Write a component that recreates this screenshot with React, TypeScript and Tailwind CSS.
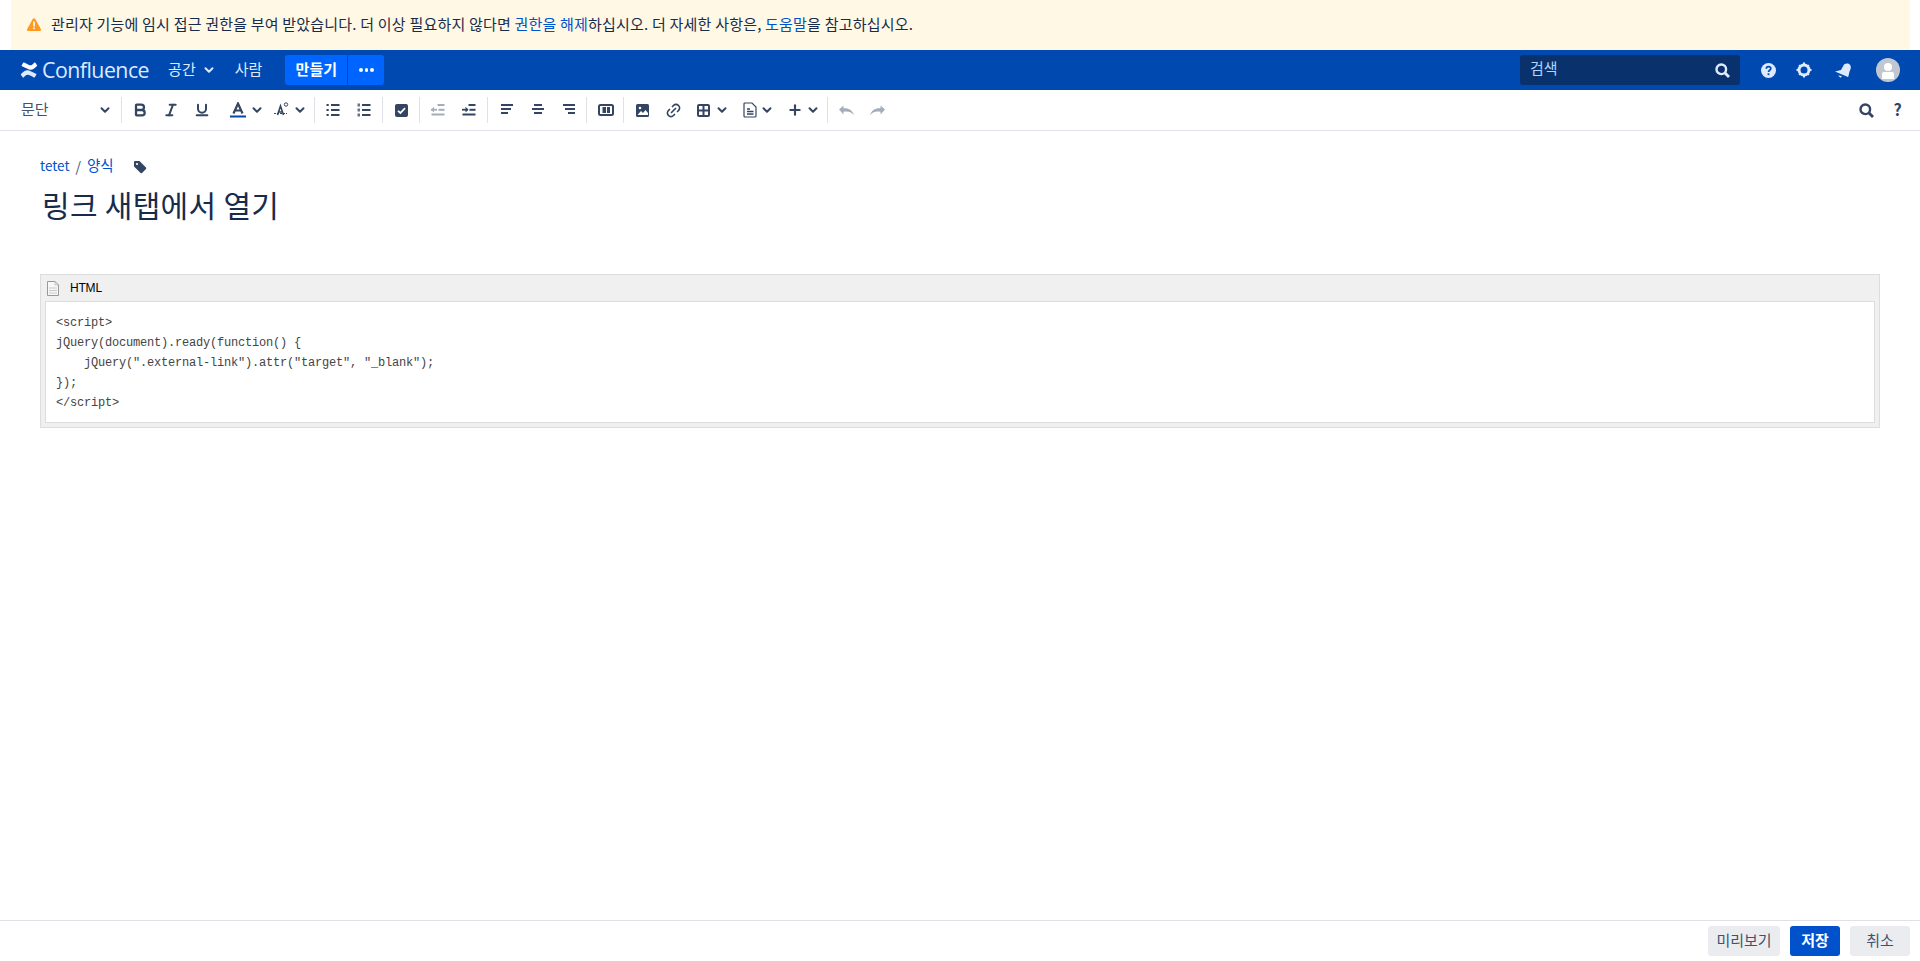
import React from "react";
import { Bold, Italic, Underline, ChevronDown, Link2, Plus } from "lucide-react";

const ink = "#344563";

function Sep() {
  return <div className="w-px h-[26px] bg-[#dfe1e6] shrink-0" />;
}

function Btn({ children, className = "w-[31px]" }: { children: React.ReactNode; className?: string }) {
  return <div className={`h-[30px] flex items-center justify-center shrink-0 ${className}`}>{children}</div>;
}

function Chev() {
  return <ChevronDown size={14} strokeWidth={3.4} color={ink} className="shrink-0" />;
}

function Mag({ color, size = 15 }: { color: string; size?: number }) {
  return (
    <svg width={size} height={size} viewBox="0 0 15 15" fill="none" stroke={color}>
      <circle cx="6.300" cy="6.300" r="4.800" strokeWidth="2.400" />
      <path d="M10 10l4 4" strokeWidth="2.800" />
    </svg>
  );
}

function Lines({ rows, color = ink }: { rows: [number, number][]; color?: string }) {
  return (
    <svg width="14" height="14" viewBox="0 0 14 14">
      {rows.map(([x, w], i) => (
        <rect key={i} x={x} y={1 + i * 4} width={w} height="2" fill={color} />
      ))}
    </svg>
  );
}

function ListIcon({ numbered }: { numbered?: boolean }) {
  return (
    <svg width="14" height="14" viewBox="0 0 14 14" fill={ink}>
      {[1, 6, 11].map((y) => (
        <g key={y}>
          <rect x="5" y={y} width="8.500" height="2" />
          {numbered ? <rect x="0.500" y={y - 0.5} width="2.500" height="3" opacity=".75" /> : <rect x="0.500" y={y} width="2.200" height="2" />}
        </g>
      ))}
    </svg>
  );
}

function IndentIcon({ color, out }: { color: string; out?: boolean }) {
  return (
    <svg width="14" height="14" viewBox="0 0 14 14" fill={color}>
      <rect x="6.500" y="1" width="7" height="2" />
      <rect x="7.500" y="5.800" width="6" height="2" />
      <rect x="0.500" y="10.500" width="13" height="2" />
      <rect x="0" y="5.800" width="6" height="1.800" />
      {out ? <path d="M0 6.700 3 3.800v5.800z" /> : <path d="M6.500 6.700 3.500 3.800v5.800z" />}
    </svg>
  );
}

function Toolbar() {
  return (
    <div className="h-[41px] flex items-center border-b border-[#e1e3e8] bg-white pl-[8px] pr-[7px] shrink-0">
      <div className="w-[113px] flex items-center justify-between pl-[13px] pr-[9px] text-[15px] text-[#42526e]">
        <span className="-mt-[2px]">문단</span>
        <Chev />
      </div>
      <Sep />
      <div className="w-[2px]" />
      <Btn><Bold size={16} strokeWidth={3.4} color={ink} /></Btn>
      <Btn><Italic size={16} strokeWidth={3} color={ink} /></Btn>
      <Btn><Underline size={16} strokeWidth={3} color={ink} /></Btn>
      <Btn className="w-[44px] ml-[8px] gap-[4px]">
        <svg width="16" height="16" viewBox="0 0 16 16">
          <path d="M3.500 11.500 8 1.500l4.500 10M5 8.500h6" fill="none" stroke={ink} strokeWidth="2.200" />
          <rect y="13.500" width="16" height="2" fill="#0747a6" />
        </svg>
        <Chev />
      </Btn>
      <Btn className="w-[42px] gap-[3px]">
        <svg width="16" height="16" viewBox="0 0 16 16" fill="none" stroke={ink}>
          <path d="M3.500 13 6.500 4l3 9M4.500 10h4" strokeWidth="1.600" />
          <path d="M0 11.500h13" strokeWidth="1.200" strokeDasharray="2 1" />
          <circle cx="12" cy="2.500" r="1.700" strokeWidth="1" />
        </svg>
        <Chev />
      </Btn>
      <div className="w-[3px]" />
      <Sep />
      <div className="w-[2px]" />
      <Btn><ListIcon /></Btn>
      <Btn><ListIcon numbered /></Btn>
      <div className="w-[3px]" />
      <Sep />
      <div className="w-[3px]" />
      <Btn>
        <svg width="13" height="13" viewBox="0 0 13 13">
          <rect width="13" height="13" rx="2" fill={ink} />
          <path d="M3 6.800 5.400 9 10 4.200" fill="none" stroke="#fff" strokeWidth="1.800" />
        </svg>
      </Btn>
      <div className="w-[2px]" />
      <Sep />
      <div className="w-[2px]" />
      <Btn><IndentIcon color="#a5adba" out /></Btn>
      <Btn><IndentIcon color={ink} /></Btn>
      <div className="w-[3px]" />
      <Sep />
      <div className="w-[3px]" />
      <Btn><Lines rows={[[1, 12], [1, 10], [1, 7]]} /></Btn>
      <Btn><Lines rows={[[3, 8], [1, 12], [3, 8]]} /></Btn>
      <Btn><Lines rows={[[1, 12], [3, 10], [6, 7]]} /></Btn>
      <div className="w-[2px]" />
      <Sep />
      <div className="w-[3px]" />
      <Btn>
        <svg width="16" height="12" viewBox="0 0 16 12">
          <rect x="1" y="1" width="14" height="10" rx="1.500" fill="none" stroke={ink} strokeWidth="2" />
          <rect x="4.500" y="3" width="3.500" height="6" fill={ink} />
          <rect x="9" y="3" width="3" height="6" fill={ink} />
        </svg>
      </Btn>
      <div className="w-[2px]" />
      <Sep />
      <div className="w-[3px]" />
      <Btn>
        <svg width="13" height="13" viewBox="0 0 13 13">
          <rect width="13" height="13" rx="1.500" fill={ink} />
          <circle cx="4" cy="4" r="1.300" fill="#fff" />
          <path d="M1.500 11 5 7l2 2 2.500-3L12 9v2z" fill="#fff" />
        </svg>
      </Btn>
      <Btn><Link2 size={17} strokeWidth={2.4} color={ink} className="-rotate-45" /></Btn>
      <Btn className="w-[46px] gap-[5px] pl-[1px]">
        <svg width="13" height="13" viewBox="0 0 13 13" fill="none" stroke={ink} strokeWidth="2">
          <rect x="1" y="1" width="11" height="11" rx="1" />
          <path d="M6.500 1v11M1 6.500h11" />
        </svg>
        <Chev />
      </Btn>
      <Btn className="w-[46px] gap-[3px] ml-[-1px] pl-[2px]">
        <svg width="14" height="16" viewBox="0 0 14 16" fill="none" stroke={ink} strokeWidth="1.200">
          <path d="M1 2a1 1 0 0 1 1-1h7l4 4v9a1 1 0 0 1-1 1H2a1 1 0 0 1-1-1z" />
          <path d="M4 7h3M4 9.500h6.500M4 12h6.500" strokeWidth="1.400" />
        </svg>
        <Chev />
      </Btn>
      <Btn className="w-[45px] gap-[3px] pl-[1px]">
        <Plus size={16} strokeWidth={3.2} color={ink} />
        <Chev />
      </Btn>
      <div className="w-[2px]" />
      <Sep />
      <div className="w-[3px]" />
      <Btn>
        <svg width="15" height="11" viewBox="0 0 15 11" fill="#a5adba">
          <path d="M0 4.500 4.500.5v2.700c5-.5 9 1.700 10.500 7.300-2-3.400-5.500-4.500-10.500-3.800v2.800z" />
        </svg>
      </Btn>
      <Btn>
        <svg width="15" height="11" viewBox="0 0 15 11" fill="#a5adba">
          <path d="M15 4.500 10.500.5v2.700C5.500 2.700 1.500 4.900 0 10.500c2-3.400 5.500-4.500 10.500-3.800v2.800z" />
        </svg>
      </Btn>
      <div className="ml-auto flex items-center">
        <Btn className="w-[31px]"><Mag color={ink} /></Btn>
        <Btn className="w-[31px] text-[16px] font-bold text-[#344563] pb-[2px]">?</Btn>
      </div>
    </div>
  );
}

function Nav() {
  return (
    <div className="h-[40px] bg-[#0049b0] flex items-center pl-[20px] pr-[20px] text-white text-[15px] shrink-0">
      <svg width="18" height="16" viewBox="0 0 18 16" className="shrink-0">
        <path d="M1 12c3-3 5-4.500 8-3.500l7 3.200c.5.300.5.600.3 1l-1.500 2.500c-.2.400-.5.400-1 .2-2-1-4-2.200-5.500-2.600-1.800-.4-3 .8-4.500 2.500-.3.300-.6.300-1 .1L1.100 13c-.4-.200-.4-.600-.100-1z" fill="#deebff" />
        <path d="M17 4c-3 3-5 4.500-8 3.500L2 4.300c-.5-.300-.5-.600-.3-1L3.200.8c.2-.400.5-.400 1-.200 2 1 4 2.200 5.500 2.600 1.800.4 3-.8 4.500-2.500.3-.3.600-.3 1-.1l1.700 2.400c.4.200.4.600.1 1z" fill="#fff" />
      </svg>
      <span className="ml-[4px] text-[21.300px] leading-none font-normal font-['Open_Sans'] text-[#deebff] tracking-[-0.5px]">Confluence</span>
      <span className="ml-[19px] text-[#deebff] -mt-[2px]">공간</span>
      <ChevronDown size={14} strokeWidth={3.4} color="#deebff" className="ml-[6px]" />
      <span className="ml-[19px] text-[#deebff] -mt-[2px]">사람</span>
      <div className="ml-[23px] h-[30px] w-[62px] bg-[#0065ff] rounded-l-[3px] flex items-center justify-center font-bold pb-[2px]">만들기</div>
      <div className="ml-px h-[30px] w-[36px] bg-[#0065ff] rounded-r-[3px] flex items-center justify-center gap-[2px]">
        <span className="w-[3.500px] h-[3.500px] rounded-full bg-white" />
        <span className="w-[3.500px] h-[3.500px] rounded-full bg-white" />
        <span className="w-[3.500px] h-[3.500px] rounded-full bg-white" />
      </div>
      <div className="ml-auto h-[30px] w-[220px] bg-[#09326c] rounded-[3px] flex items-center justify-between pl-[10px] pr-[10px] text-[#b3d4ff]">
        <span className="-mt-[3px]">검색</span>
        <Mag color="#deebff" />
      </div>
      <div className="w-[36px] ml-[10px] flex justify-center">
        <svg width="15" height="15" viewBox="0 0 15 15">
          <circle cx="7.500" cy="7.500" r="7.500" fill="#deebff" />
          <path d="M5.300 5.800c0-3 4.500-2.800 4.500-.2 0 1.700-2.300 1.700-2.300 3.500" fill="none" stroke="#0049b0" strokeWidth="1.700" />
          <rect x="6.600" y="10.300" width="1.800" height="1.800" fill="#0049b0" />
        </svg>
      </div>
      <div className="w-[36px] flex justify-center">
        <svg width="16" height="16" viewBox="0 0 16 16">
          <circle cx="8" cy="8" r="5" fill="none" stroke="#deebff" strokeWidth="3" />
          <path d="M7 .5h2v2H7zM7 13.500h2v2H7zM.5 7h2v2h-2zM13.500 7h2v2h-2zM2.400 3.800l1.400-1.400 1.400 1.400-1.400 1.400zM10.800 12.200l1.400-1.400 1.400 1.400-1.400 1.400zM10.800 3.800l1.400-1.400 1.400 1.400-1.400 1.400zM2.400 12.200l1.400-1.400 1.400 1.400-1.400 1.400z" fill="#deebff" />
        </svg>
      </div>
      <div className="w-[42px] flex justify-center">
        <svg width="16" height="15" viewBox="0 0 16 15" fill="#deebff">
          <path d="M0 8.500 6 7l3-5.500c2-1.500 4.500-1.500 6 .3 1.400 2 .8 4.800-.5 6.700l-1 4.500c-.2 1-1 1.200-1.700.5z" />
          <path d="M3 12.500l2.500 2.300L7 13z" />
        </svg>
      </div>
      <div className="ml-[12px] w-[24px] h-[24px] rounded-full bg-[#c1c7d0] flex flex-col items-center justify-end overflow-hidden shrink-0">
        <span className="w-[8px] h-[8px] rounded-full bg-white mb-[1px]" />
        <span className="w-[12px] h-[7px] rounded-t-[2px] bg-white mb-[3px]" />
      </div>
    </div>
  );
}

const code = `<script>
jQuery(document).ready(function() {
    jQuery(".external-link").attr("target", "_blank");
});
</script>`;

export default function App() {
  return (
    <div className="h-screen flex flex-col bg-white overflow-hidden font-['Noto_Sans_CJK_KR','Noto_Sans',sans-serif] text-[#172b4d]">
      <div className="h-[50px] ml-[11px] mr-[10px] bg-[#fff8e4] flex items-center pl-[16px] text-[15px] tracking-[0.2px] shrink-0">
        <svg width="14" height="13" viewBox="0 0 14 13" className="shrink-0 -mt-[1px]">
          <path d="M5.900.8a1.300 1.300 0 0 1 2.200 0l5.700 10.200c.5.900-.1 2-1.100 2H1.300C.3 13-.3 11.900.2 11z" fill="#ff991f" />
          <rect x="6.200" y="3.500" width="1.600" height="5" fill="#fff" />
          <rect x="6.200" y="9.500" width="1.600" height="1.600" fill="#fff" />
        </svg>
        <span className="ml-[10px] -mt-[2px]">
          관리자 기능에 임시 접근 권한을 부여 받았습니다. 더 이상 필요하지 않다면 <span className="text-[#0052cc]">권한을 해제</span>하십시오. 더 자세한 사항은, <span className="text-[#0052cc]">도움말</span>을 참고하십시오.
        </span>
      </div>
      <Nav />
      <Toolbar />
      <div className="flex-1 min-h-0 px-[40px]">
        <div className="mt-[24px] h-[22px] flex items-center text-[14px] leading-none">
          <span className="text-[#0052cc] text-[13.500px]">tetet</span>
          <span className="mx-[6px] text-[#42526e]">/</span>
          <span className="text-[#0052cc] -mt-[2px] text-[14.500px]">양식</span>
          <svg width="14" height="14" viewBox="0 0 14 14" className="ml-[19px] mt-[2px]" fill={ink}>
            <path d="M1 2a1 1 0 0 1 1-1h4.500l6.500 6.500a1 1 0 0 1 0 1.400l-4 4a1 1 0 0 1-1.400 0L1 6.500z" />
            <circle cx="4" cy="4" r="1.100" fill="#fff" />
          </svg>
        </div>
        <h1 className="mt-[9px] ml-[2px] text-[30px] tracking-[0.3px] leading-[36px] font-normal text-[#172b4d]">링크 새탭에서 열기</h1>
        <div className="mt-[52px] border border-[#dddddd] bg-[#f0f0f0] px-[4px] pb-[4px]">
          <div className="h-[26px] flex items-center text-[12px] tracking-[-0.2px] text-black font-['Liberation_Sans'] ml-[2px]">
            <svg width="12" height="15" viewBox="0 0 12 15" fill="none" stroke="#999999" strokeWidth="1">
              <path d="M.5.500h7.500l3.500 3.500v10.500H.5z" fill="#f7f7f7" />
              <path d="M8 .5v3.500h3.500M2.500 7h7M2.500 9.500h7M2.500 12h7" strokeDasharray="1 1" />
            </svg>
            <span className="ml-[11px]">HTML</span>
          </div>
          <pre className="border border-[#dddddd] bg-white h-[122px] pt-[11px] pl-[10px] text-[12px] leading-[20px] tracking-[-0.2px] text-[#444444] font-['Liberation_Mono',monospace]">{code}</pre>
        </div>
      </div>
      <div className="h-[41px] border-t border-[#dfe1e6] flex items-center justify-end gap-[10px] pr-[10px] text-[15px] shrink-0">
        <div className="w-[72px] h-[30px] rounded-[3px] bg-[#ebecf0] text-[#42526e] flex items-center justify-center pb-[2px]">미리보기</div>
        <div className="w-[50px] h-[30px] rounded-[3px] bg-[#0052cc] text-white font-bold flex items-center justify-center pb-[2px]">저장</div>
        <div className="w-[60px] h-[30px] rounded-[3px] bg-[#ebecf0] text-[#42526e] flex items-center justify-center pb-[2px]">취소</div>
      </div>
    </div>
  );
}
